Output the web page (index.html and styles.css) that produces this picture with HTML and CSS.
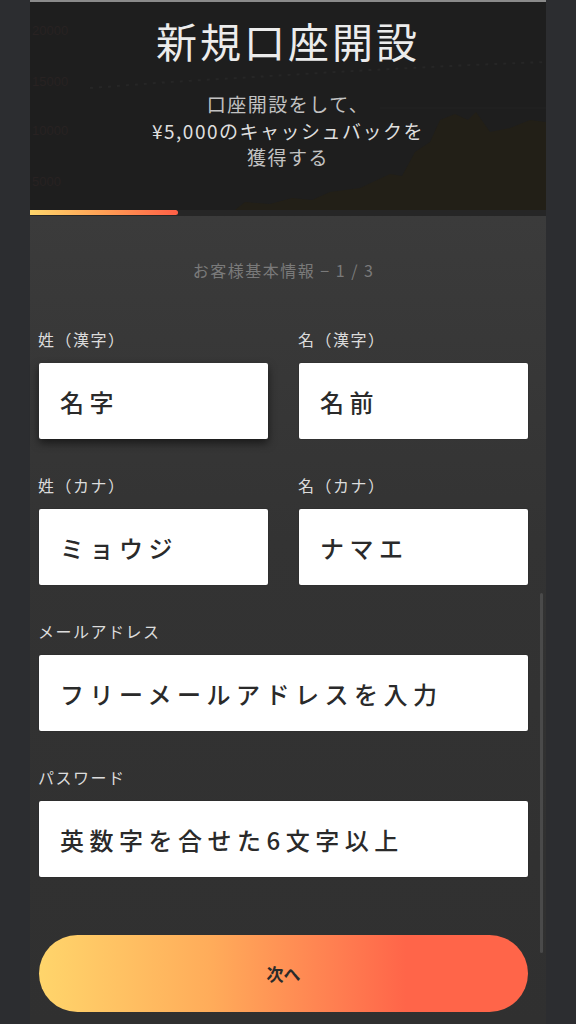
FILE: index.html
```html
<!DOCTYPE html>
<html lang="ja">
<head>
  <meta charset="UTF-8" />
  <meta name="viewport" content="width=device-width, initial-scale=1.0" />
  <title>新規口座開設</title>
  <link rel="stylesheet" href="styles.css">
</head>
<body>
  <div class="screen">
    <header class="hero">
      <svg class="hero-chart" width="516" height="212" viewBox="0 0 516 212">
        <g fill="#282222" font-family="Liberation Sans, sans-serif" font-size="13">
          <text x="2" y="33">20000</text>
          <text x="2" y="84">15000</text>
          <text x="2" y="133">10000</text>
          <text x="2" y="184">5000</text>
        </g>
        <polyline points="60,86 140,80 240,74 340,68 440,63 516,60" fill="none" stroke="#262626" stroke-width="2" stroke-dasharray="3 6"/>
        <line x1="350" y1="106" x2="516" y2="106" stroke="#232323" stroke-width="1"/>
        <path d="M200,212 L215,200 L240,202 L262,196 L282,198 L300,190 L330,186 L360,172 L372,174 L385,150 L400,140 L410,118 L425,112 L438,118 L446,110 L460,130 L480,126 L500,118 L516,120 L516,212 Z" fill="#221f17"/>
      </svg>
      <h1 class="hero-title">新規口座開設</h1>
      <p class="hero-text">口座開設をして、<br><span class="hero-em">¥5,000のキャッシュバックを</span><br>獲得する</p>
      <div class="progress"><div class="progress-bar" style="width: 148px"></div></div>
    </header>

    <main class="form">
      <p class="step">お客様基本情報 − 1 / 3</p>

      <div class="row">
        <div class="field">
          <label class="label">姓（漢字）</label>
          <div class="input focused">名字</div>
        </div>
        <div class="field">
          <label class="label">名（漢字）</label>
          <div class="input">名前</div>
        </div>
      </div>

      <div class="row">
        <div class="field">
          <label class="label">姓（カナ）</label>
          <div class="input">ミョウジ</div>
        </div>
        <div class="field">
          <label class="label">名（カナ）</label>
          <div class="input">ナマエ</div>
        </div>
      </div>

      <div class="field">
        <label class="label">メールアドレス</label>
        <div class="input">フリーメールアドレスを入力</div>
      </div>

      <div class="field">
        <label class="label">パスワード</label>
        <div class="input">英数字を合せた6文字以上</div>
      </div>

      <button class="next">次へ</button>

      <div class="scrollbar"></div>
    </main>
  </div>
</body>
</html>
```

FILE: styles.css
```css
html, body {
  margin: 0;
  height: 100%;
}
body {
  background: #2c2d30;
  font-family: "Noto Sans CJK JP", "Noto Sans", sans-serif;
  overflow: hidden;
}
.screen {
  width: 516px;
  height: 1024px;
  margin: 0 auto;
  display: flex;
  flex-direction: column;
}

/* header */
.hero {
  position: relative;
  background: #1e1e1e;
  border-top: 2px solid #8a8a8a;
  height: 216px;
  box-sizing: border-box;
  padding-top: 14px;
  text-align: center;
  overflow: hidden;
}
.hero-chart {
  position: absolute;
  left: 0;
  top: 0;
}
.hero-title {
  position: relative;
  margin: 0;
  font-size: 41px;
  font-weight: 400;
  line-height: 48px;
  color: #ececec;
  letter-spacing: 3px;
}
.hero-text {
  position: relative;
  margin: 27px 0 0;
  font-size: 19px;
  line-height: 26.5px;
  letter-spacing: 1.5px;
  color: #c2c2c2;
}
.hero-em {
  color: #dedede;
}
.progress {
  position: absolute;
  left: 0;
  right: 0;
  bottom: 0;
  height: 6px;
  background: #262626;
}
.progress-bar {
  height: 5px;
  border-radius: 0 3px 3px 0;
  background: linear-gradient(to right, #ffd66b, #ff9f55 50%, #ff5f46);
}

/* form */
.form {
  position: relative;
  flex: 1;
  background: linear-gradient(#3b3b3b, #333333 40%, #303030);
  padding: 44px 18px 0 9px;
  display: flex;
  flex-direction: column;
}
.step {
  margin: 0 0 49px;
  text-align: center;
  font-size: 16px;
  line-height: 20px;
  letter-spacing: 1.5px;
  color: #7a7a7a;
}
.row {
  display: flex;
  gap: 31px;
}
.row .field {
  flex: 1;
}
.field {
  margin-bottom: 36px;
}
.label {
  display: block;
  margin: 0 0 14px -1px;
  font-size: 16px;
  line-height: 20px;
  letter-spacing: 1.5px;
  color: #dcdcdc;
}
.input {
  height: 76px;
  box-sizing: border-box;
  background: #fff;
  border-radius: 2px;
  padding: 0 0 0 21px;
  display: flex;
  align-items: center;
  font-size: 24px;
  font-weight: 500;
  letter-spacing: 5.5px;
  color: #2a2a2a;
  box-shadow: 0 0 0 1px rgba(0, 0, 0, 0.08);
}
.input.focused {
  box-shadow: 0 4px 8px rgba(0, 0, 0, 0.55);
}
.next {
  margin-top: 22px;
  height: 77px;
  border: none;
  border-radius: 39px;
  background: linear-gradient(to right, #ffd56b, #ffac5a 35%, #ff7c50 62%, #ff6549 75%, #ff6549);
  font-family: inherit;
  font-size: 17px;
  font-weight: 700;
  color: #2a2a2a;
  cursor: pointer;
}
.scrollbar {
  position: absolute;
  right: 3px;
  top: 377px;
  width: 3px;
  height: 360px;
  border-radius: 2px;
  background: #4a4a4a;
}
```
